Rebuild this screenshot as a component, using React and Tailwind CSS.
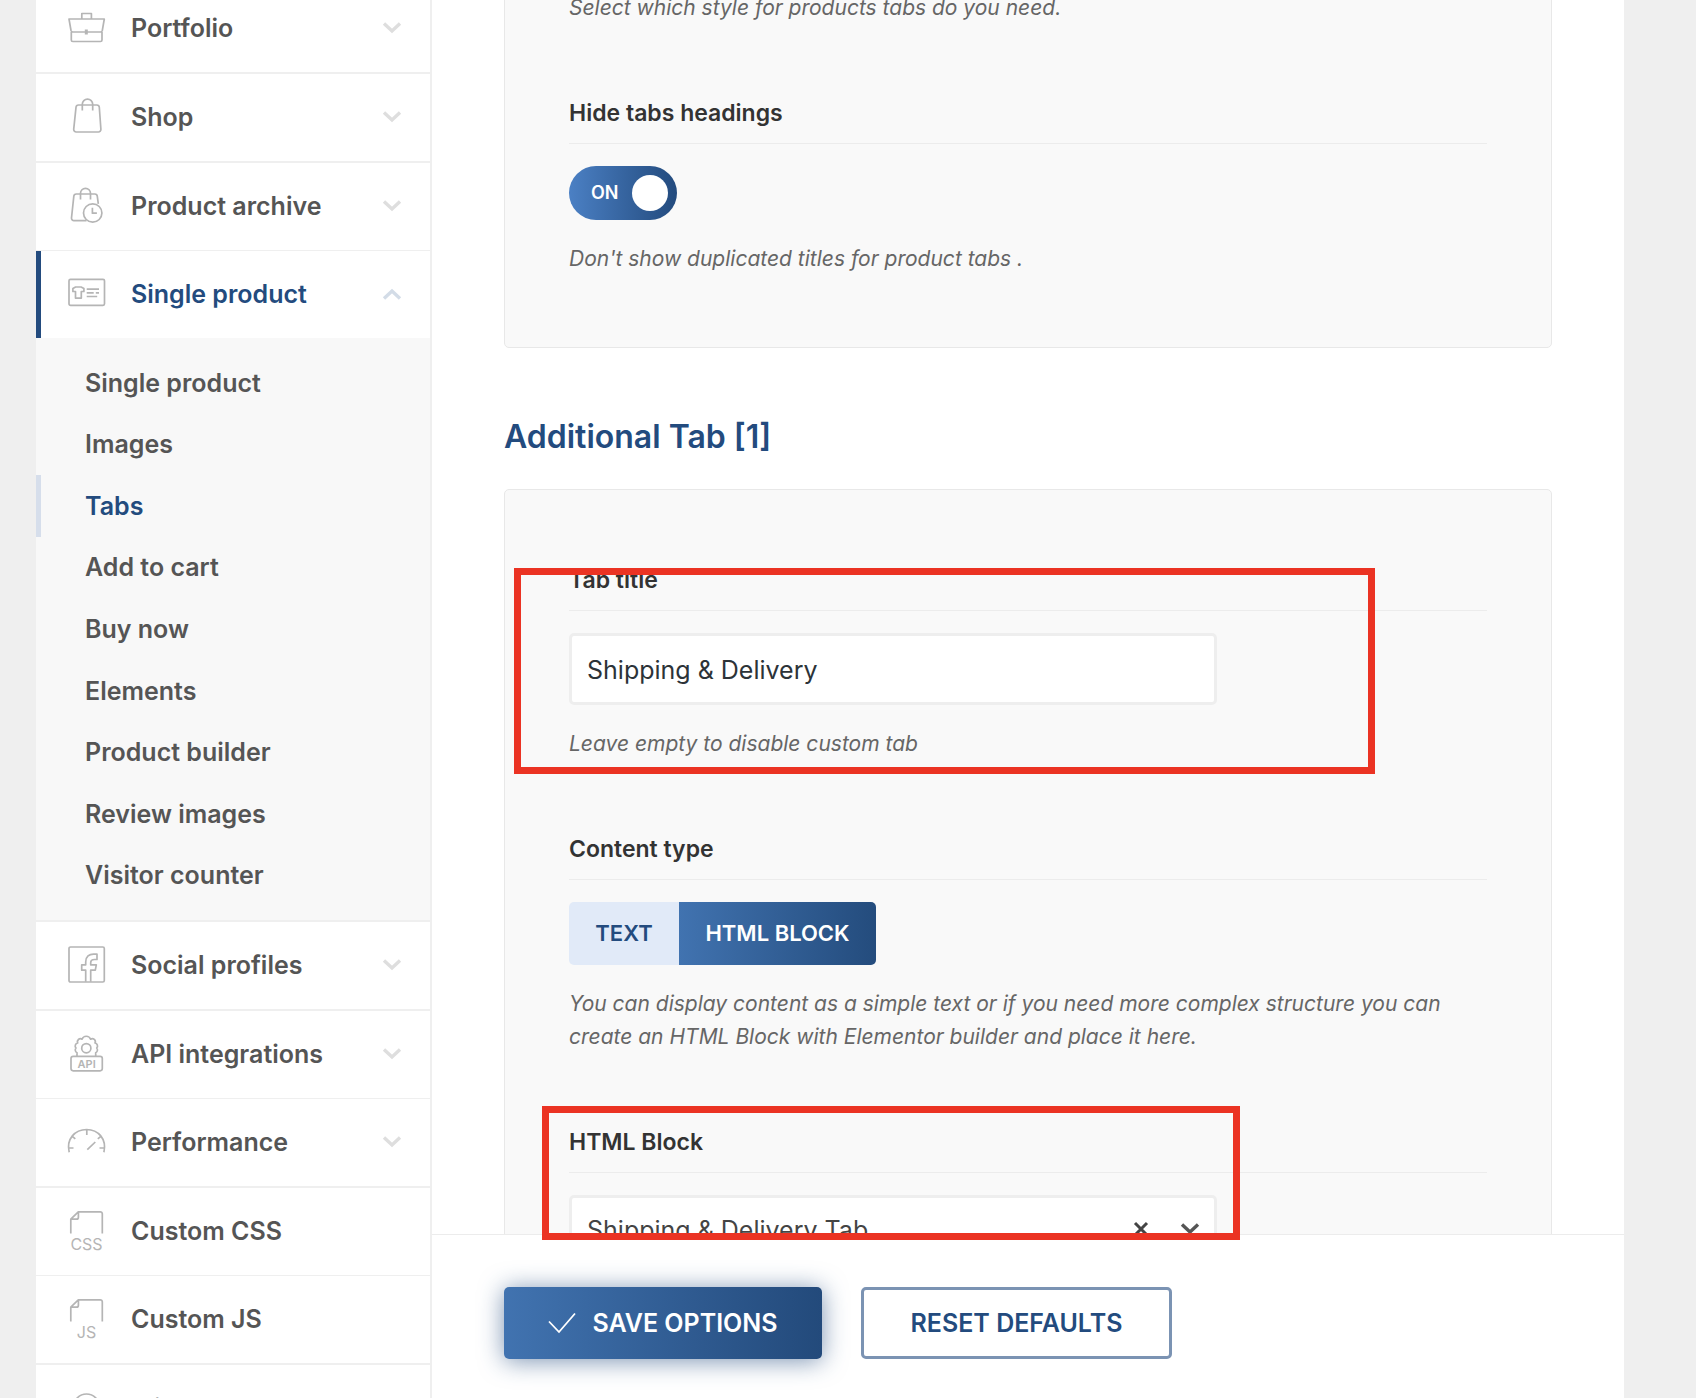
import { useState } from "react";

function Icon({ children }) {
  return (
    <svg
      viewBox="0 0 40 40"
      className="w-10 h-10 shrink-0 overflow-visible text-[#b5b5b5]"
      fill="none"
      stroke="currentColor"
      strokeWidth="1.7"
      strokeLinejoin="round"
      aria-hidden="true"
    >
      {children}
    </svg>
  );
}

function Chevron({ up, className }) {
  return (
    <svg viewBox="0 0 20 12" className={className} fill="none" stroke="currentColor" strokeWidth="3.4" aria-hidden="true">
      <path d={up ? "M2 10.5 10 3l8 7.5" : "M2 1.5 10 9l8-7.5"} />
    </svg>
  );
}

const FilePath = () => (
  <path d="M3.8 22.5V8.2L11.3.8h22a2 2 0 0 1 2 2v19.7M3.8 8.2h5.6a2 2 0 0 0 2-2V.8" />
);

const icons = {
  portfolio: (
    <Icon>
      <path d="M14.8 11V5.5h9.6V11M2 11h35.3l-2 11.5a2 2 0 0 1-2 1.5H6a2 2 0 0 1-2-1.5zM4.3 24v8a1.5 1.5 0 0 0 1.5 1.5h27.7A1.5 1.5 0 0 0 35 32v-8" />
      <path d="M19.3 21.5v5" strokeWidth="3" />
    </Icon>
  ),
  shop: (
    <Icon>
      <path d="M11.5 8h18.3a2.5 2.5 0 0 1 2.5 2.3l1.6 22a2.5 2.5 0 0 1-2.5 2.7H9.2a2.5 2.5 0 0 1-2.5-2.7L9 10.3A2.5 2.5 0 0 1 11.5 8zM15.3 13.5V7.3a5.2 5.2 0 0 1 10.4 0v6.2" />
    </Icon>
  ),
  archive: (
    <Icon>
      <path d="M19.5 34.7H7A2.5 2.5 0 0 1 4.5 32l2.3-21.7A2.5 2.5 0 0 1 9.3 8h18.5a2.5 2.5 0 0 1 2.5 2.3l1 7.5M13.5 13.5V7.3a5 5 0 0 1 10 0v6.2" />
      <circle cx="25.7" cy="27" r="9.2" />
      <path d="M25.4 21.8v5.4h4.5" />
    </Icon>
  ),
  product: (
    <Icon>
      <rect x="2" y="5.3" width="35.5" height="26" rx="1.5" />
      <path d="M8.600 13h5.500l2.800 1.500v3h-2.600v6.600H8.500v-6.600H5.900v-3zM19.700 15.200H32M19.700 18.800h7M28.800 18.800H32M19.700 22.500h10.500" />
    </Icon>
  ),
  social: (
    <Icon>
      <rect x="2" y="2" width="35.3" height="35" rx="1.5" />
      <path d="M18.7 36.800V25.200h-4v-5.400h4V17c0-5.500 3.500-8 8.300-7.800h3v5.300h-2.500c-2.800 0-3.800 1.300-3.800 3.300v2h5.600l-1 5.400h-4.600v11.600" />
    </Icon>
  ),
  api: (
    <Icon>
      <rect x="4" y="22.300" width="31.300" height="14.500" rx="2.200" />
      <circle cx="19.300" cy="14.200" r="4.600" />
      <path d="M10 22v-3.300a3 3 0 0 1-1-4.700 3 3 0 0 1 1.700-5 3 3 0 0 1 4.300-3.800 4.600 4.600 0 0 1 8.600 0A3 3 0 0 1 28 9a3 3 0 0 1 1.700 5 3 3 0 0 1-1 4.700V22" />
      <text x="19.700" y="33.500" textAnchor="middle" stroke="none" fill="currentColor" className="font-['Inter'] text-[11px] font-semibold">
        API
      </text>
    </Icon>
  ),
  performance: (
    <Icon>
      <path d="M2.200 30.200C-1 17 8 7.500 19.600 7.500S40 17 36.900 30.200M19.800 7.500V13M2 26h4.500M32.500 26H37M5.300 14.300l3 2.500M33.800 14.300l-3 2.500M20.300 27.700l8-7.700" />
    </Icon>
  ),
  css: (
    <Icon>
      <FilePath />
      <text x="19.500" y="38.500" textAnchor="middle" stroke="none" fill="currentColor" className="font-['Inter'] text-[16px]">
        CSS
      </text>
    </Icon>
  ),
  js: (
    <Icon>
      <FilePath />
      <text x="19.500" y="38.500" textAnchor="middle" stroke="none" fill="currentColor" className="font-['Inter'] text-[16px]">
        JS
      </text>
    </Icon>
  ),
  misc: (
    <Icon>
      <circle cx="19.500" cy="19" r="13" />
    </Icon>
  ),
};

const topItems = [
  { name: "Portfolio", icon: icons.portfolio, line: "border-b-2" },
  { name: "Shop", icon: icons.shop, line: "border-b-2" },
  { name: "Product archive", icon: icons.archive, line: "border-b" },
];

const subItems = [
  "Single product",
  "Images",
  "Tabs",
  "Add to cart",
  "Buy now",
  "Elements",
  "Product builder",
  "Review images",
  "Visitor counter",
];

const bottomItems = [
  { name: "Social profiles", icon: icons.social, line: "border-b-2" },
  { name: "API integrations", icon: icons.api, line: "border-b" },
  { name: "Performance", icon: icons.performance, line: "border-b-2" },
  { name: "Custom CSS", icon: icons.css, line: "border-b", leaf: true },
  { name: "Custom JS", icon: icons.js, line: "border-b-2", leaf: true },
  { name: "Misc", icon: icons.misc, line: "border-b", leaf: true },
];

function NavItem({ name, icon, line = "", leaf, active }) {
  return (
    <li className={`shrink-0 border-[#efefef] ${line}`}>
      <a
        href="#"
        className={`flex items-center h-[87px] border-l-[5px] pb-0.5 pl-[26px] pr-7 ${
          active ? "border-[#234b7e] text-[#234b7e]" : "border-transparent text-[#555]"
        }`}
      >
        {icon}
        <span className="ml-6 flex-1 text-[25px] leading-8 font-semibold">{name}</span>
        {!leaf && (
          <Chevron up={active} className={`w-5 h-3 ${active ? "text-[#d3dce7]" : "text-[#dedede]"}`} />
        )}
      </a>
    </li>
  );
}

function Sidebar() {
  return (
    <nav className="w-[396px] shrink-0 border-r-2 border-[#efefef] overflow-hidden">
      <ul className="-mt-[15px] flex flex-col">
        {topItems.map((item) => (
          <NavItem key={item.name} {...item} />
        ))}
        <NavItem name="Single product" icon={icons.product} active />
        <li className="shrink-0 border-b-2 border-[#efefef] bg-[#f8f8f8]">
          <ul className="min-h-[582px] py-[14px] grid auto-rows-fr">
            {subItems.map((name) => (
              <li key={name} className="grid">
                <a
                  href="#"
                  className={`flex items-center border-l-[5px] pl-11 text-[25px] leading-8 font-semibold ${
                    name === "Tabs" ? "border-[#d6deeb] text-[#234b7e]" : "border-transparent text-[#555]"
                  }`}
                >
                  {name}
                </a>
              </li>
            ))}
          </ul>
        </li>
        {bottomItems.map((item) => (
          <NavItem key={item.name} {...item} />
        ))}
      </ul>
    </nav>
  );
}

function Hint({ children }) {
  return <p className="mt-[22px] text-[21px] leading-[33px] italic text-[#666]">{children}</p>;
}

function Field({ label, htmlFor, hint, children }) {
  return (
    <div>
      <div className="border-b border-[#ececec] pb-3 mb-[22px]">
        <label htmlFor={htmlFor} className="block text-[23px] leading-9 font-semibold text-[#333]">
          {label}
        </label>
      </div>
      {children}
      {hint && <Hint>{hint}</Hint>}
    </div>
  );
}

function Card({ className = "", children }) {
  return (
    <div
      className={`flex flex-col gap-[71px] rounded-[5px] border border-[#e8e8e8] bg-[#f9f9f9] px-16 py-[72px] ${className}`}
    >
      {children}
    </div>
  );
}

export default function App() {
  const [hideHeadings, setHideHeadings] = useState(true);
  const [title, setTitle] = useState("Shipping & Delivery");

  return (
    <div className="h-screen overflow-hidden bg-white pr-[10px] font-['Inter','Liberation_Sans',sans-serif]">
      <div className="flex h-full bg-[#efefef] pl-9 pr-[72px]">
        <div className="flex min-w-0 flex-1 bg-white">
          <Sidebar />

          <main className="relative flex min-w-0 flex-1 flex-col">
            <div className="min-h-0 flex-1 overflow-hidden px-[72px]">
              <Card className="-mt-[104px]">
                <Hint>Select which style for products tabs do you need.</Hint>

                <Field label="Hide tabs headings" htmlFor="hide-headings" hint="Don't show duplicated titles for product tabs .">
                  <label className="flex h-[54px] w-[108px] items-center justify-between rounded-full bg-linear-to-r from-[#4b80c4] to-[#234b7e] pl-[22px] pr-[9px] text-white">
                    <input
                      id="hide-headings"
                      type="checkbox"
                      className="sr-only"
                      checked={hideHeadings}
                      onChange={(e) => setHideHeadings(e.target.checked)}
                    />
                    <span className="text-lg leading-6 font-semibold">{hideHeadings ? "ON" : "OFF"}</span>
                    <span className="h-9 w-9 rounded-full bg-white" />
                  </label>
                </Field>
              </Card>

              <h2 className="mt-[69px] mb-8 text-[32px] leading-10 font-semibold text-[#234b7e]">
                Additional Tab [1]
              </h2>

              <Card>
                <Field label="Tab title" htmlFor="tab-title" hint="Leave empty to disable custom tab">
                  <input
                    id="tab-title"
                    type="text"
                    value={title}
                    onChange={(e) => setTitle(e.target.value)}
                    className="block h-[72px] w-full max-w-[648px] rounded-[5px] border-[3px] border-[#eee] bg-white px-[15px] pt-0.5 text-[25px] text-[#2c3338] outline-none"
                  />
                </Field>

                <Field
                  label="Content type"
                  hint="You can display content as a simple text or if you need more complex structure you can create an HTML Block with Elementor builder and place it here."
                >
                  <div className="flex h-[63px] w-fit overflow-hidden rounded-[5px] text-[22px] leading-8 font-semibold">
                    <button type="button" className="w-[110px] bg-[#e1eaf8] pb-0.5 text-[#234b7e]">
                      TEXT
                    </button>
                    <button type="button" className="w-[197px] bg-linear-to-r from-[#4173b0] to-[#244c7d] pb-0.5 text-white">
                      HTML BLOCK
                    </button>
                  </div>
                </Field>

                <Field label="HTML Block" htmlFor="html-block">
                  <div className="relative max-w-[648px]">
                    <select
                      id="html-block"
                      className="block h-[72px] w-full appearance-none rounded-[5px] border-[3px] border-[#eee] bg-white px-[15px] text-[25px] text-[#444] outline-none"
                    >
                      <option>Shipping &amp; Delivery Tab</option>
                    </select>
                    <button type="button" aria-label="Clear" className="absolute right-[68px] top-[26px] text-[#444]">
                      <svg viewBox="0 0 16 16" className="w-4 h-4" fill="none" stroke="currentColor" strokeWidth="3">
                        <path d="M2 2l12 12M14 2 2 14" />
                      </svg>
                    </button>
                    <Chevron className="pointer-events-none absolute right-[17px] top-7 h-3 w-5 text-[#555]" />
                  </div>
                </Field>
              </Card>
            </div>

            <footer className="flex h-[164px] shrink-0 gap-[39px] border-t border-[#ececec] bg-white px-[72px] pt-[52px] text-[25px] leading-8 font-semibold">
              <button
                type="button"
                className="flex h-[72px] w-[318px] items-center justify-center gap-4 rounded-[5px] bg-linear-to-r from-[#4173b0] to-[#234a7b] text-white shadow-[0_2px_24px_rgba(35,75,126,0.6)]"
              >
                <svg viewBox="0 0 28 22" className="h-[22px] w-7" fill="none" stroke="currentColor" strokeWidth="1.8" aria-hidden="true">
                  <path d="M1 9.500 11 20 27 1.500" />
                </svg>
                SAVE OPTIONS
              </button>
              <button
                type="button"
                className="h-[72px] w-[311px] rounded-[5px] border-[3px] border-[#7b93b3] bg-white text-[#234b7e]"
              >
                RESET DEFAULTS
              </button>
            </footer>

            {/* highlight frames */}
            <div className="pointer-events-none absolute left-[82px] top-[568px] h-[206px] w-[861px] border-[7px] border-[#eb3323]" />
            <div className="pointer-events-none absolute left-[110px] top-[1106px] h-[134px] w-[698px] border-[7px] border-[#eb3323]" />
          </main>
        </div>
      </div>
    </div>
  );
}
